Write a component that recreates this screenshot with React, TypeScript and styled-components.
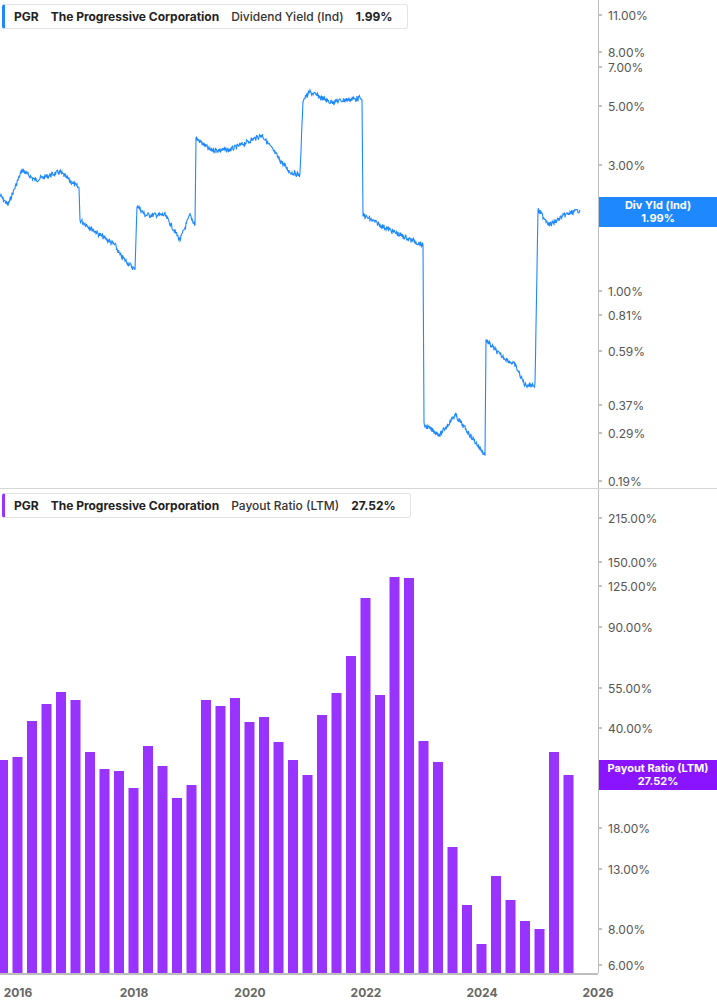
import React from "react";
import styled, { createGlobalStyle } from "styled-components";

const Global = createGlobalStyle`
  html, body { margin: 0; padding: 0; background: #fff; }
  body { font-family: Inter, "Liberation Sans", sans-serif; }
`;

const Page = styled.div`
  width: 717px; height: 1005px; display: flex; flex-direction: column; overflow: hidden;
`;
const Panel = styled.div<{ $h: number; $border?: boolean }>`
  height: ${p => p.$h}px; display: flex; position: relative;
  border-bottom: ${p => (p.$border ? "1px solid #d6d6d6" : "none")};
`;
const Plot = styled.div`
  width: 598px; height: 100%; border-right: 1px solid #bdbdbd; position: relative;
`;
const Axis = styled.div`
  flex: 1; position: relative;
`;
const Tick = styled.div`
  position: absolute; left: 0; transform: translateY(-50%);
  font-size: 12px; color: #555; display: flex; align-items: center; gap: 6px;
  &::before { content: ""; width: 3px; height: 1px; background: #888; }
`;
const Legend = styled.div`
  position: absolute; left: 2px; top: 4px; display: flex; gap: 12px; align-items: center;
  border: 1px solid #e4e4e4; border-left: 3px solid ${p => p.color}; border-radius: 3px;
  padding: 4px 14px 4px 9px; background: #fff; font-size: 12px; font-weight: 700; color: #222;
`;
const LegendSub = styled.span`font-weight: 500; color: #333;`;
const Flag = styled.div<{ $bg: string; $top: number }>`
  position: absolute; left: 0; right: 0; top: ${p => p.$top}px; height: 30px;
  background: ${p => p.$bg}; color: #fff; font-size: 11px; font-weight: 700;
  display: flex; flex-direction: column; align-items: center; justify-content: center; line-height: 13px;
`;
const Years = styled.div`
  height: 32px; width: 598px; border-top: 2px solid #bdbdbd; position: relative; box-sizing: border-box;
`;
const Year = styled.span`
  position: absolute; top: 10px; transform: translateX(-50%); font-size: 12px; font-weight: 700; color: #666;
`;

const topTicks: [string, number][] = [["11.00%",15],["8.00%",52],["7.00%",67],["5.00%",106],["3.00%",165],["1.00%",291],["0.81%",315],["0.59%",351],["0.37%",405],["0.29%",433],["0.19%",481]];
const botTicks: [string, number][] = [["215.00%",29],["150.00%",73],["125.00%",97],["90.00%",138],["55.00%",199],["40.00%",239],["18.00%",339],["13.00%",380],["8.00%",440],["6.00%",476]];

const keys: [number, number][] = [[0,195],[8,205],[22,170],[35,180],[60,172],[75,185],[79,188],[80,220],[100,235],[115,245],[120,255],[135,270],[137,205],[145,215],[165,215],[180,240],[190,215],[195,225],[196,138],[210,150],[230,150],[262,135],[280,160],[290,172],[300,175],[303,100],[310,92],[330,102],[360,98],[362,100],[363,215],[380,225],[400,235],[423,245],[424,425],[440,435],[455,415],[470,435],[485,455],[486,340],[500,355],[515,365],[525,385],[535,385],[538,210],[550,225],[565,215],[580,210]];

function linePath() {
  const pts: string[] = [];
  let seed = 7;
  const rnd = () => { seed = (seed * 9301 + 49297) % 233280; return seed / 233280 - 0.5; };
  for (let i = 0; i < keys.length - 1; i++) {
    const [x0, y0] = keys[i], [x1, y1] = keys[i + 1];
    const steps = Math.max(1, Math.round((x1 - x0) * 2));
    for (let s = 0; s < steps; s++) {
      const t = s / steps;
      const jump = x1 - x0 <= 2;
      const y = y0 + (y1 - y0) * t + (jump ? 0 : rnd() * 5);
      pts.push(`${(x0 + (x1 - x0) * t).toFixed(1)},${y.toFixed(1)}`);
    }
  }
  pts.push(`${keys[keys.length - 1][0]},${keys[keys.length - 1][1]}`);
  return "M" + pts.join(" L");
}

const barTops = [760,757,721,704,692,700,752,769,771,788,746,766,798,785,700,706,698,722,717,742,760,775,715,693,656,598,695,577,578,741,762,847,905,944,876,900,921,929,752,775];

export default function App() {
  const off = 489;
  return (
    <Page>
      <Global />
      <Panel $h={488} $border>
        <Plot>
          <svg width="598" height="488" style={{ display: "block" }}>
            <path d={linePath()} fill="none" stroke="#1e88ff" strokeWidth="1.1" />
          </svg>
          <Legend color="#1e88ff">
            <span>PGR</span><span>The Progressive Corporation</span>
            <LegendSub>Dividend Yield (Ind)</LegendSub><span>1.99%</span>
          </Legend>
        </Plot>
        <Axis>
          {topTicks.map(([l, y]) => <Tick key={l} style={{ top: y }}>{l}</Tick>)}
          <Flag $bg="#1e88ff" $top={197}><span>Div Yld (Ind)</span><span>1.99%</span></Flag>
        </Axis>
      </Panel>
      <Panel $h={484}>
        <Plot>
          <svg width="598" height="484" style={{ display: "block" }}>
            {barTops.map((t, i) => {
              const cx = 3 + i * 14.5;
              return <rect key={i} x={cx - 5} y={t - off} width={10} height={484 - (t - off)} fill="#9933ff" />;
            })}
          </svg>
          <Legend color="#9933ff">
            <span>PGR</span><span>The Progressive Corporation</span>
            <LegendSub>Payout Ratio (LTM)</LegendSub><span>27.52%</span>
          </Legend>
        </Plot>
        <Axis>
          {botTicks.map(([l, y]) => <Tick key={l} style={{ top: y }}>{l}</Tick>)}
          <Flag $bg="#8a14ff" $top={271}><span>Payout Ratio (LTM)</span><span>27.52%</span></Flag>
        </Axis>
      </Panel>
      <Years>
        {[2016, 2018, 2020, 2022, 2024, 2026].map((y, i) => <Year key={y} style={{ left: 18 + i * 116 }}>{y}</Year>)}
      </Years>
    </Page>
  );
}
